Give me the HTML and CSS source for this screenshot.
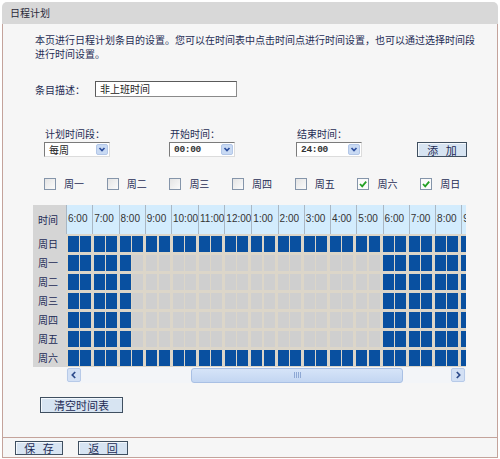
FILE: index.html
```html
<!DOCTYPE html>
<html lang="zh-CN">
<head>
<meta charset="utf-8">
<title>日程计划</title>
<link rel="stylesheet" href="styles.css">
</head>
<body>
<div class="page">
  <div class="title">日程计划</div>
  <div class="panel">
    <p class="intro">本页进行日程计划条目的设置。您可以在时间表中点击时间点进行时间设置，也可以通过选择时间段<br>进行时间设置。</p>

    <div class="desc-row">
      <span class="desc-label">条目描述：</span>
      <span class="text-input">非上班时间</span>
    </div>

    <div class="fields">
      <div class="field f1">
        <div class="field-label">计划时间段：</div>
        <div class="select"><span>每周</span><i class="arrow"><svg width="10" height="9" viewBox="0 0 10 9"><path d="M2.5 3 L5 5.6 L7.5 3" fill="none" stroke="#2d4f9e" stroke-width="1.7"/></svg></i></div>
      </div>
      <div class="field f2">
        <div class="field-label">开始时间：</div>
        <div class="select"><span class="mono">00:00</span><i class="arrow"><svg width="10" height="9" viewBox="0 0 10 9"><path d="M2.5 3 L5 5.6 L7.5 3" fill="none" stroke="#2d4f9e" stroke-width="1.7"/></svg></i></div>
      </div>
      <div class="field f3">
        <div class="field-label">结束时间：</div>
        <div class="select"><span class="mono">24:00</span><i class="arrow"><svg width="10" height="9" viewBox="0 0 10 9"><path d="M2.5 3 L5 5.6 L7.5 3" fill="none" stroke="#2d4f9e" stroke-width="1.7"/></svg></i></div>
      </div>
      <button class="btn btn-add spaced">添 加</button>
    </div>

    <div class="days">
      <label class="day"><span class="box"></span>周一</label>
      <label class="day"><span class="box"></span>周二</label>
      <label class="day"><span class="box"></span>周三</label>
      <label class="day"><span class="box"></span>周四</label>
      <label class="day"><span class="box"></span>周五</label>
      <label class="day"><span class="box checked"><svg width="10" height="10" viewBox="0 0 10 10"><path d="M2 5 L4.2 7.3 L8.2 2.6" fill="none" stroke="#23a023" stroke-width="1.8"/></svg></span>周六</label>
      <label class="day"><span class="box checked"><svg width="10" height="10" viewBox="0 0 10 10"><path d="M2 5 L4.2 7.3 L8.2 2.6" fill="none" stroke="#23a023" stroke-width="1.8"/></svg></span>周日</label>
    </div>

    <div class="schedule">
      <div class="labels">
        <div class="lab-head">时间</div>
        <div class="lab">周日</div>
        <div class="lab">周一</div>
        <div class="lab">周二</div>
        <div class="lab">周三</div>
        <div class="lab">周四</div>
        <div class="lab">周五</div>
        <div class="lab">周六</div>
      </div>
      <div class="hours" id="hours"></div>
      <div class="scrollbar">
        <span class="sb-btn"><svg width="12" height="12" viewBox="0 0 12 12"><path d="M7.2 3 L4.3 6 L7.2 9" fill="none" stroke="#2c4a8a" stroke-width="1.7"/></svg></span>
        <span class="sb-track"><span class="sb-thumb"><span class="grip"></span></span></span>
        <span class="sb-btn"><svg width="12" height="12" viewBox="0 0 12 12"><path d="M4.8 3 L7.7 6 L4.8 9" fill="none" stroke="#2c4a8a" stroke-width="1.7"/></svg></span>
      </div>
    </div>

    <button class="btn btn-clear">清空时间表</button>
  </div>
  <div class="footer">
    <button class="btn btn-save spaced">保 存</button>
    <button class="btn btn-back spaced">返 回</button>
  </div>
</div>
<script src="script.js"></script>
</body>
</html>
```

FILE: styles.css
```css
* { box-sizing: border-box; }

body {
  margin: 0;
  background: #ffffff;
  font-family: "Noto Sans CJK SC", "Noto Sans", sans-serif;
  font-size: 10px;
  color: #1f2d55;
}

.page {
  width: 496px;
  margin: 2px 0 0 2px;
}

.title {
  height: 22px;
  line-height: 22px;
  background: #d8d8d8;
  border-radius: 5px 5px 0 0;
  padding-left: 8px;
  color: #2a2a3a;
}

.panel {
  height: 414px;
  border: 1px solid #c4a39b;
  border-top: 0;
  background: #f6f6f6;
  padding: 9px 0 0 32px;
}

.intro {
  margin: 0;
  line-height: 14px;
}

.desc-row {
  margin-top: 20px;
  display: flex;
  align-items: center;
  height: 16px;
}

.desc-label { width: 60px; }

.text-input {
  width: 142px;
  height: 16px;
  line-height: 14px;
  padding-left: 4px;
  border: 1px solid #5a5a5a;
  border-right-color: #8a8a8a;
  border-bottom-color: #8a8a8a;
  background: #fff;
  color: #222;
}

.fields {
  margin-top: 30px;
  padding-left: 9px;
  display: flex;
  align-items: flex-end;
}

.f1 { width: 125px; }
.f2 { width: 127px; }
.f3 { width: 121px; }

.field-label {
  line-height: 14px;
  padding-left: 1px;
  margin-bottom: 1px;
}

.select {
  width: 66px;
  height: 15px;
  display: flex;
  align-items: center;
  padding-left: 4px;
  border: 1px solid #7b7b7b;
  border-right-color: #dcdcdc;
  border-bottom-color: #dcdcdc;
  background: #fff;
  color: #222;
}

.mono {
  font-family: "Liberation Mono", monospace;
  font-size: 9.5px;
  letter-spacing: -0.3px;
  font-weight: bold;
  color: #333;
}

.arrow {
  margin-left: auto;
  margin-right: 1px;
  width: 12px;
  height: 11px;
  display: flex;
  align-items: center;
  justify-content: center;
  background: #c9daf3;
  border: 1px solid #b3c7e8;
  border-radius: 2px;
}

.btn {
  display: block;
  padding: 0;
  margin: 0;
  border: 1px solid #3f4f60;
  background: #d7e4f2;
  box-shadow: inset 1px 1px 0 #f4f8fc;
  font-family: "Noto Sans CJK SC", "Noto Sans", sans-serif;
  font-size: 11px;
  color: #1d2b55;
  line-height: 12px;
  white-space: pre;
}

.btn.spaced {
  letter-spacing: 2.5px;
  padding-left: 2.5px;
}

.btn-add {
  width: 50px;
  height: 15px;
}

.days {
  margin-top: 21px;
  padding-left: 9px;
  display: flex;
  height: 12px;
}

.day {
  flex: 0 0 62.7px;
  display: flex;
  align-items: center;
  gap: 8px;
  line-height: 12px;
}

.box {
  width: 12px;
  height: 12px;
  border: 1px solid #8595aa;
  background: linear-gradient(135deg, #e4e4e4, #fbfbfb);
  display: flex;
  align-items: center;
  justify-content: center;
}

.box.checked { background: #fbfbfb; }

.schedule {
  margin: 15px 0 0 -2px;
  display: grid;
  grid-template-columns: 33px 400px;
  grid-template-rows: 162px 16px;
}

.labels {
  background: #d5d5d5;
  color: #1c2a55;
}

.lab-head {
  height: 29px;
  line-height: 29px;
  padding-left: 5px;
}

.lab {
  height: 19px;
  line-height: 19px;
  padding-left: 5px;
}

.hours {
  overflow: hidden;
  background: #dcd6c9;
}

.head-row {
  display: flex;
  height: 29px;
  background: #d3ecfd;
}

.hh {
  flex: 0 0 26.25px;
  border-left: 1px solid #a9b7c4;
  padding-left: 1px;
  line-height: 28px;
  font-family: "Liberation Sans", Arial, sans-serif;
  font-size: 10px;
  color: #333;
  white-space: nowrap;
}

.row {
  display: flex;
  height: 19px;
}

.hr {
  flex: 0 0 26.25px;
  display: flex;
  gap: 1.25px;
  padding: 1.5px;
}

.c {
  flex: 1;
  background: #cfcfcf;
}

.c.on { background: #0950a0; }

.scrollbar {
  grid-column: 2;
  display: flex;
  align-items: center;
  background: #f3f5f8;
}

.sb-btn {
  flex: 0 0 14px;
  height: 14px;
  margin: 0 1px;
  display: flex;
  align-items: center;
  justify-content: center;
  background: #d3e0f4;
  border: 1px solid #b7cae8;
  border-radius: 2px;
}

.sb-track {
  flex: 1;
  height: 16px;
  display: flex;
  align-items: center;
}

.sb-thumb {
  margin-left: 109px;
  width: 212px;
  height: 15px;
  background: linear-gradient(#d6e4f8, #c3d6f2);
  border: 1px solid #a9c0e4;
  border-radius: 3px;
  display: flex;
  align-items: center;
  justify-content: center;
}

.grip {
  width: 7px;
  height: 6px;
  background: repeating-linear-gradient(90deg, #8ea8d4 0 1px, transparent 1px 2px);
}

.btn-clear {
  margin: 14px 0 0 5px;
  width: 83px;
  height: 16px;
}

.footer {
  height: 20px;
  border: 1px solid #c4a39b;
  border-top: 0;
  background: #f6f6f6;
  padding: 3px 0 0 12px;
  display: flex;
  gap: 15px;
  align-items: flex-start;
}

.btn-save { width: 48px; height: 14px; }
.btn-back { width: 50px; height: 14px; }
```

FILE: script.js
```js
(function () {
  var days = ['周日', '周一', '周二', '周三', '周四', '周五', '周六'];
  var hours = [];
  for (var i = 0; i < 16; i++) hours.push((6 + i) % 24);
  var grid = document.getElementById('hours');

  var head = document.createElement('div');
  head.className = 'head-row';
  hours.forEach(function (h) {
    var d = document.createElement('div');
    d.className = 'hh';
    var l = h % 12;
    if (l === 0) l = 12;
    d.textContent = l + ':00';
    head.appendChild(d);
  });
  grid.appendChild(head);

  days.forEach(function (name, di) {
    var row = document.createElement('div');
    row.className = 'row';
    hours.forEach(function (h) {
      var cell = document.createElement('div');
      cell.className = 'hr';
      [0, 0.5].forEach(function (m) {
        var t = h + m;
        var on = di === 0 || di === 6 || t < 8.5 || t >= 18;
        var s = document.createElement('span');
        s.className = on ? 'c on' : 'c';
        cell.appendChild(s);
      });
      row.appendChild(cell);
    });
    grid.appendChild(row);
  });
})();
```
